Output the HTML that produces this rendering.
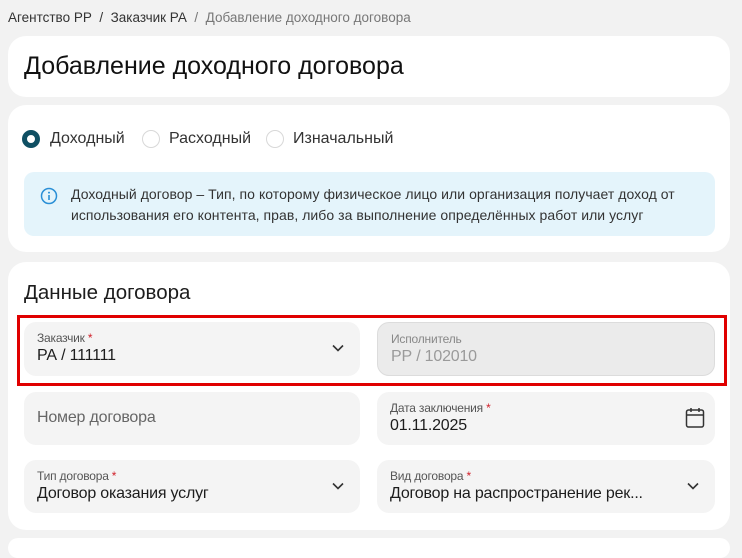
<!DOCTYPE html>
<html><head><meta charset="utf-8"><style>
*{box-sizing:border-box;margin:0;padding:0}
body{width:742px;height:540px;overflow:hidden;background:#f2f2f2;font-family:"Liberation Sans",sans-serif;color:#1d1d1d;position:relative}
.a{position:absolute}
.card{position:absolute;left:8px;width:722px;background:#fff;border-radius:18px}
.f{position:absolute;background:#f4f4f4;border-radius:12px}
.lab{position:absolute;left:13px;top:9px;font-size:12px;color:#555;letter-spacing:-0.2px}
.lab b{color:#d0202a;font-weight:normal}
.val{position:absolute;left:13px;top:25px;font-size:16px;color:#1d1d1d;letter-spacing:-0.2px;white-space:nowrap}
.chev{position:absolute;right:16px;top:22px}
.radio{position:absolute;top:130px;width:18px;height:18px;border-radius:50%;border:1.5px solid #d8d8d8;background:#fff}
.rl{position:absolute;top:130px;font-size:16px;color:#333}
</style></head><body>
<div class="a" style="left:8px;top:10px;font-size:13.5px;color:#333;white-space:nowrap">Агентство РР &nbsp;/&nbsp; Заказчик РА &nbsp;<span style="color:#777">/&nbsp; Добавление доходного договора</span></div>
<div class="card" style="top:36px;height:61px"><div class="a" style="left:16px;top:16px;font-size:25px;color:#111">Добавление доходного договора</div></div>
<div class="card" style="top:105px;height:147px"></div>
<div class="radio" style="left:22px;border:5px solid #0f4f63"></div>
<div class="rl" style="left:50px">Доходный</div>
<div class="radio" style="left:142px"></div>
<div class="rl" style="left:169px">Расходный</div>
<div class="radio" style="left:266px"></div>
<div class="rl" style="left:293px">Изначальный</div>
<div class="a" style="left:24px;top:172px;width:691px;height:64px;background:#e4f4fb;border-radius:10px">
<svg class="a" style="left:16px;top:15px" width="18" height="18" viewBox="0 0 18 18"><circle cx="9" cy="9" r="7.5" fill="none" stroke="#2a8fd6" stroke-width="1.5"/><circle cx="9" cy="5.6" r="1" fill="#2a8fd6"/><path d="M9 8v5" stroke="#2a8fd6" stroke-width="1.6"/></svg>
<div class="a" style="left:47px;top:12px;font-size:14px;line-height:21px;color:#333;letter-spacing:0.05px;width:660px">Доходный договор – Тип, по которому физическое лицо или организация получает доход от<br>использования его контента, прав, либо за выполнение определённых работ или услуг</div>
</div>
<div class="card" style="top:262px;height:268px"><div class="a" style="left:16px;top:19px;font-size:20.5px;color:#1d1d1d">Данные договора</div></div>
<div class="card" style="top:538px;height:20px"></div>

<div class="f" style="left:24px;top:322px;width:336px;height:54px"><div class="lab">Заказчик <b>*</b></div><div class="val">РА / 111111</div>
<svg class="chev" width="12" height="8" viewBox="0 0 12 8"><path d="M1 1.5l5 5 5-5" fill="none" stroke="#333" stroke-width="1.6"/></svg></div>
<div class="f" style="left:377px;top:322px;width:338px;height:54px;background:#ebebeb;border:1px solid #dcdcdc"><div class="lab" style="color:#888">Исполнитель</div><div class="val" style="color:#9a9a9a">РР / 102010</div></div>
<div class="a" style="left:17px;top:315px;width:710px;height:71px;border:3px solid #e00000"></div>

<div class="f" style="left:24px;top:392px;width:336px;height:53px"><div class="val" style="top:17px;color:#666">Номер договора</div></div>
<div class="f" style="left:377px;top:392px;width:338px;height:53px"><div class="lab">Дата заключения <b>*</b></div><div class="val">01.11.2025</div>
<svg class="a" style="right:10px;top:15px" width="20" height="22" viewBox="0 0 20 22"><rect x="1.5" y="3" width="17" height="17" rx="2" fill="none" stroke="#333" stroke-width="1.5"/><path d="M1.5 8h17M6 1v4M14 1v4" stroke="#333" stroke-width="1.5"/></svg></div>

<div class="f" style="left:24px;top:460px;width:336px;height:53px"><div class="lab">Тип договора <b>*</b></div><div class="val">Договор оказания услуг</div>
<svg class="chev" width="12" height="8" viewBox="0 0 12 8"><path d="M1 1.5l5 5 5-5" fill="none" stroke="#333" stroke-width="1.6"/></svg></div>
<div class="f" style="left:377px;top:460px;width:338px;height:53px"><div class="lab">Вид договора <b>*</b></div><div class="val">Договор на распространение рек...</div>
<svg class="chev" width="12" height="8" viewBox="0 0 12 8"><path d="M1 1.5l5 5 5-5" fill="none" stroke="#333" stroke-width="1.6"/></svg></div>
</body></html>
